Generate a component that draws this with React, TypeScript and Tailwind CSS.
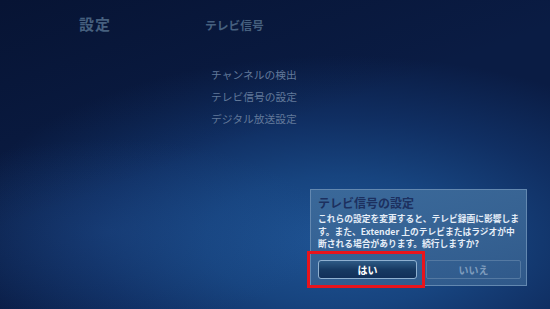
export default function App() {
  const jp = { fontFamily: '"Noto Sans CJK JP", "Noto Sans", sans-serif' };

  return (
    <div
      className="relative w-[550px] h-[309px] overflow-hidden bg-[radial-gradient(ellipse_70%_60%_at_62%_78%,#1f5494_0%,#17447f_35%,#102f63_65%,#0a1c44_100%)]"
      style={jp}
    >
      <div className="absolute inset-0 bg-[linear-gradient(160deg,rgba(4,12,36,0.5)_0%,rgba(4,12,36,0)_45%)]" />
      <div className="absolute inset-0 bg-[radial-gradient(ellipse_40%_30%_at_20%_75%,rgba(40,90,160,0.25)_0%,rgba(40,90,160,0)_100%)]" />

      <div className="relative flex flex-col h-full">
        {/* header */}
        <div className="flex items-baseline pt-[16px]">
          <div className="ml-[79px] w-[126px] text-[15px] font-bold text-[#46607f] leading-none tracking-[1px]">設定</div>
          <div className="text-[11.75px] font-bold text-[#46607f] leading-none">テレビ信号</div>
        </div>

        {/* menu */}
        <div className="ml-[211px] mt-[37px] flex flex-col gap-[9px] text-[10.75px] text-[#62799a] leading-[13px]">
          <div>チャンネルの検出</div>
          <div>テレビ信号の設定</div>
          <div>デジタル放送設定</div>
        </div>
      </div>

      {/* dialog */}
      <div className="absolute left-[310px] top-[189px] w-[217px] h-[97px] border border-[#6388b0] bg-[linear-gradient(180deg,rgba(66,112,158,0.8)_0%,rgba(56,98,145,0.78)_100%)] pl-[7px] pt-[5px]">
        <div className="text-[12px] font-bold text-[#1c305f] leading-[16px]">テレビ信号の設定</div>
        <div className="mt-[2px] text-[8.75px] font-bold text-[#e6eef8] leading-[12.5px] whitespace-nowrap">
          <div>これらの設定を変更すると、テレビ録画に影響しま</div>
          <div>す。また、Extender 上のテレビまたはラジオが中</div>
          <div>断される場合があります。続行しますか?</div>
        </div>
        <div className="mt-[9px] flex gap-[9px]">
          <div className="w-[99px] h-[19px] rounded-[3px] border border-[#8fb0d0] bg-[linear-gradient(180deg,#2e5a85_0%,#173a63_50%,#12305a_100%)] flex items-center justify-center text-[10px] font-bold text-white">
            はい
          </div>
          <div className="w-[95px] h-[19px] rounded-[2px] border border-[#5479a2] flex items-center justify-center text-[10px] font-bold text-[#7f9cbd]">
            いいえ
          </div>
        </div>
      </div>

      {/* highlight */}
      <div className="absolute left-[307px] top-[251px] w-[118px] h-[37px] border-[3px] border-[#e8141c]" />
    </div>
  );
}
